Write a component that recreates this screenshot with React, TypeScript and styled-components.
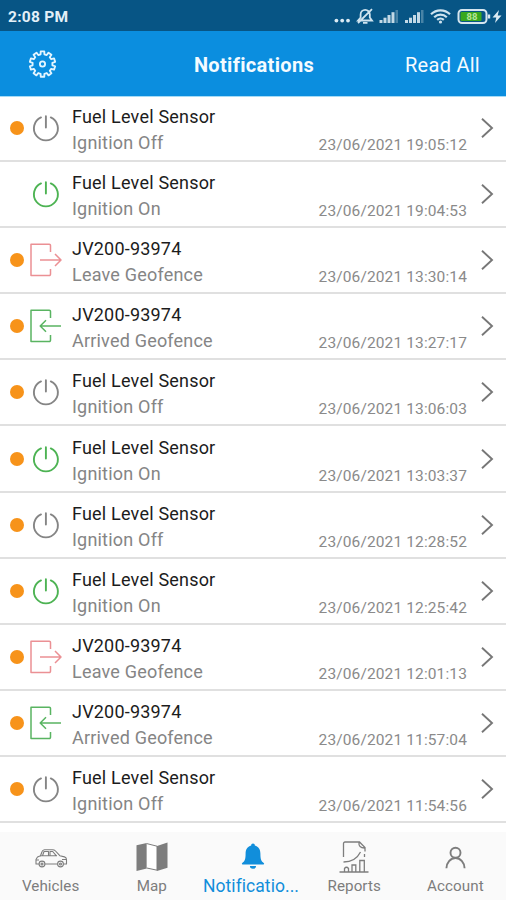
import React from "react";
import styled, { createGlobalStyle } from "styled-components";

const Global = createGlobalStyle`
  * { box-sizing: border-box; }
  body { margin: 0; background: #fff; font-family: Roboto, "Liberation Sans", sans-serif; }
  svg { display: block; flex: none; overflow: visible; }
`;

const Screen = styled.div`
  width: 506px;
  height: 900px;
  display: flex;
  flex-direction: column;
  overflow: hidden;
  background: #fff;
`;

const StatusBar = styled.div`
  height: 31px;
  flex: none;
  display: flex;
  align-items: center;
  justify-content: space-between;
  padding: 2px 1px 0 8px;
  background: #075585;
  color: #e3f0f8;
`;

const Clock = styled.span`
  font-size: 15.5px;
  font-weight: 700;
  letter-spacing: 0.25px;
`;

const Header = styled.header`
  height: 66px;
  flex: none;
  display: grid;
  grid-template-columns: 1fr auto 1fr;
  align-items: center;
  padding: 2px 26px 0 28px;
  border-bottom: 1px solid #a5dbf6;
  background: #0b8edf;
  color: #f4fbff;
`;

const Title = styled.h1`
  margin: 0;
  font-size: 20px;
  font-weight: 700;
  letter-spacing: 0.33px;
`;

const ReadAll = styled.span`
  justify-self: end;
  font-size: 20px;
  letter-spacing: 0.27px;
`;

const List = styled.main`
  flex: none;
  display: flex;
  flex-direction: column;
  margin-top: -1px;
`;

const Row = styled.div`
  height: 66.1px;
  display: flex;
  align-items: center;
  border-bottom: 2px solid #e0e0e0;
  padding: 0 12px 0 10px;
`;

const Dot = styled.span<{ $unread: boolean }>`
  width: 14px;
  height: 14px;
  flex: none;
  border-radius: 50%;
  background: ${(p) => (p.$unread ? "#f7931a" : "transparent")};
`;

const IconSlot = styled.div`
  width: 48px;
  flex: none;
  display: flex;
  justify-content: center;
  padding-right: 4px;
`;

const Body = styled.div`
  flex: 1;
  display: grid;
  grid-template-columns: 1fr auto;
  padding-top: 4px;
`;

const Name = styled.div`
  grid-column: 1 / -1;
  height: 26px;
  line-height: 26px;
  font-size: 18px;
  letter-spacing: 0.2px;
  color: #1c1c1c;
`;

const Event = styled.div`
  height: 26px;
  line-height: 26px;
  font-size: 18px;
  letter-spacing: 0.2px;
  color: #858585;
`;

const Time = styled.div`
  height: 26px;
  line-height: 30px;
  font-size: 15.5px;
  letter-spacing: 0.12px;
  color: #8a8a8a;
`;

const ChevronSlot = styled.div`
  margin-left: 13px;
`;

const Tabs = styled.nav`
  flex: 1;
  display: grid;
  grid-template-columns: repeat(5, 1fr);
  margin-top: 9px;
  background: #fafafa;
`;

const Tab = styled.div<{ $active?: boolean }>`
  min-width: 0;
  display: flex;
  flex-direction: column;
  align-items: center;
  padding-top: 7px;
  color: ${(p) => (p.$active ? "#118edb" : "#7d7d7d")};
`;

const TabIcon = styled.div`
  height: 36px;
  display: flex;
  align-items: center;
`;

const TabLabel = styled.span<{ $active?: boolean }>`
  font-size: ${(p) => (p.$active ? "17.5px" : "15.2px")};
  line-height: 22px;
  letter-spacing: 0.05px;
  margin-right: ${(p) => (p.$active ? "4px" : "0")};
  white-space: nowrap;
`;

const gearPath = (() => {
  const pts: string[] = [];
  const n = 10;
  for (let i = 0; i < n; i++) {
    const a = (i * 2 * Math.PI) / n - Math.PI / 2;
    for (const [d, r] of [[-0.19, 10.3], [-0.14, 13.3], [0.14, 13.3], [0.19, 10.3]]) {
      pts.push(`${(15 + r * Math.cos(a + d)).toFixed(2)} ${(15 + r * Math.sin(a + d)).toFixed(2)}`);
    }
  }
  return `M${pts.join("L")}Z`;
})();

const Gear = () => (
  <svg width="29" height="30" viewBox="0 1 30 30" fill="none" stroke="#e4f5ff" strokeWidth="1.900" strokeLinejoin="round">
    <path d={gearPath} />
    <circle cx="15" cy="15" r="2.700" />
  </svg>
);

const StatusIcons = () => (
  <svg width="172" height="20" viewBox="0 0 172 20" fill="none" stroke="#cfe3ef">
    <g fill="#dcebf4" stroke="none">
      <circle cx="3.400" cy="13.600" r="1.900" />
      <circle cx="9.200" cy="13.600" r="1.900" />
      <circle cx="15" cy="13.600" r="1.900" />
    </g>
    <path d="M25 13.500h14l-2.200-3V7.500a4.600 4.600 0 0 0-9.200 0v3ZM30 15.800h4.500M25 16 39 2.200" strokeWidth="1.800" />
    {[46.5, 72].map((x) => (
      <g key={x} stroke="none" fill="#c3d9e6">
        <rect x={x} y="13" width="3" height="3" />
        <rect x={x + 4} y="10.700" width="3" height="5.300" />
        <rect x={x + 8} y="8" width="3" height="8" />
        <rect x={x + 12} y="5.200" width="3" height="10.800" />
        <rect x={x + 16} y="3" width="2.500" height="13" opacity=".35" />
      </g>
    ))}
    <path d="M98 7.300a13.500 13.500 0 0 1 19 0M101.200 10.200a9 9 0 0 1 12.600 0M104.200 12.900a4.800 4.800 0 0 1 6.600 0" strokeWidth="2.200" />
    <circle cx="107.500" cy="15" r="1.600" fill="#cfe3ef" stroke="none" />
    <rect x="125.500" y="3" width="28" height="13" rx="3.500" stroke="#d6e6ef" strokeWidth="2" />
    <rect x="127.500" y="5" width="21" height="9" rx="1" fill="#38a81e" stroke="none" />
    <rect x="154.800" y="7.500" width="2.400" height="4" fill="#d6e6ef" stroke="none" />
    <text x="133.500" y="13" fontSize="9.500" fontWeight="700" fill="#b5e59a" stroke="none">88</text>
    <path d="m166 3-6.500 7.500h3.800L162 16l6.500-7.500h-3.800Z" fill="#dcebf4" stroke="none" />
  </svg>
);

const Power = ({ color }: { color: string }) => (
  <svg width="28" height="28" viewBox="0 0 28 28" fill="none" stroke={color} strokeWidth="1.900" strokeLinecap="round">
    <path d="M9 3.400a12 12 0 1 0 9.800 0M13.900 2.300V13.500" />
  </svg>
);

const Geofence = ({ leave }: { leave: boolean }) => (
  <svg width="32" height="34" viewBox="0.500 0 32 34" fill="none" stroke={leave ? "#eb9094" : "#59b461"} strokeWidth="1.500" strokeLinejoin="round">
    <path d="M21 9V2.500a1.200 1.200 0 0 0-1.200-1.200H1.500V32.500h18.300A1.200 1.200 0 0 0 21 31.300V26" />
    {leave ? <path d="M10.500 17H31.500M25.500 11l6 6-6 6" /> : <path d="M31.500 17H10.500M16.500 11.200 10.700 17l5.800 5.800" />}
  </svg>
);

const Chevron = () => (
  <svg width="14" height="20" viewBox="0 0 14 20" fill="none" stroke="#777" strokeWidth="1.900">
    <path d="m2 .8 10 9.200-10 9.200" />
  </svg>
);

const Car = () => (
  <svg width="32" height="20" viewBox="0 -1.500 32 20" fill="none" stroke="currentColor" strokeWidth="1.100" strokeLinejoin="round">
    <path d="M4 15.500H1v-4.500l1.500-2.500 3-1.300 1.500-4Q7.600 1.300 9.500 1.200h8q1.800 0 3 1.300l4.300 4.700 4.700 1.200q2 .6 2 2.700v4.400h-3M10 15.500h12.500" />
    <path d="M7.500 7.200 9 3h4.500v4.200ZM15 3h2.700l3.500 4.200H15ZM5 7.200h17M1 11.500H4M27 11h4.500" />
    <circle cx="7" cy="15.500" r="2.900" /><circle cx="25.500" cy="15.500" r="2.900" />
    <circle cx="7" cy="15.500" r="1" /><circle cx="25.500" cy="15.500" r="1" />
  </svg>
);

const MapIcon = () => (
  <svg width="32" height="30" viewBox="0 0 32 30" fill="currentColor">
    <path d="M.5 3.300 10.800 1v25.500L.5 29ZM21 4 31.500.5V25.800L21 29Z" />
    <path d="M10.800 1.600 21 4.200v24L10.800 26" fill="#fff" stroke="currentColor" strokeWidth="1" />
  </svg>
);

const Bell = () => (
  <svg width="24" height="27" viewBox="0 1 24 27" fill="currentColor">
    <path d="M12 .5a1.800 1.800 0 0 0-1.800 2C6.300 3.500 4.600 6.800 4.600 10.500c0 6.500-1.100 7.700-3.300 9.400-.8.700-.5 1.600.4 1.600h20.600c.9 0 1.200-.9.400-1.600-2.200-1.700-3.300-2.900-3.300-9.400 0-3.700-1.700-7-5.600-8A1.800 1.800 0 0 0 12 .5ZM8.900 23a3.100 2.800 0 0 0 6.200 0Z" />
  </svg>
);

const Report = () => (
  <svg width="30" height="32" viewBox="0 0 30 32" fill="none" stroke="currentColor" strokeWidth="1.300">
    <path d="M4.500 16V2.500a1.500 1.500 0 0 1 1.500-1.500h14.500l5.500 5.500v4M20 1.500c-.5 3.500 1.500 5.500 5.500 5.500M25.500 13v3M4.500 21c7 0 13.500-3 17-10" />
    <path d="M.5 31h29M5.500 31v-3.500q2-2.500 4 0V31M13 31v-7h3.800v7M20.800 31V19.500h4.500V31" />
  </svg>
);

const Account = () => (
  <svg width="22" height="23" viewBox="-.5 -.5 22 23" fill="none" stroke="currentColor" strokeWidth="1.900">
    <circle cx="11" cy="6.200" r="5" />
    <path d="M1.900 21.800a9.100 10.300 0 0 1 18.200 0" />
  </svg>
);

type Kind = "off" | "on" | "leave" | "arrive";

const kinds: Record<Kind, { name: string; event: string; icon: React.ReactNode }> = {
  off: { name: "Fuel Level Sensor", event: "Ignition Off", icon: <Power color="#858585" /> },
  on: { name: "Fuel Level Sensor", event: "Ignition On", icon: <Power color="#4db353" /> },
  leave: { name: "JV200-93974", event: "Leave Geofence", icon: <Geofence leave /> },
  arrive: { name: "JV200-93974", event: "Arrived Geofence", icon: <Geofence leave={false} /> },
};

const items: { kind: Kind; time: string; read?: boolean }[] = [
  { kind: "off", time: "19:05:12" },
  { kind: "on", time: "19:04:53", read: true },
  { kind: "leave", time: "13:30:14" },
  { kind: "arrive", time: "13:27:17" },
  { kind: "off", time: "13:06:03" },
  { kind: "on", time: "13:03:37" },
  { kind: "off", time: "12:28:52" },
  { kind: "on", time: "12:25:42" },
  { kind: "leave", time: "12:01:13" },
  { kind: "arrive", time: "11:57:04" },
  { kind: "off", time: "11:54:56" },
];

const tabs = [
  { label: "Vehicles", icon: <Car /> },
  { label: "Map", icon: <MapIcon /> },
  { label: "Notificatio...", icon: <Bell />, active: true },
  { label: "Reports", icon: <Report /> },
  { label: "Account", icon: <Account /> },
];

export default function App() {
  return (
    <Screen>
      <Global />
      <StatusBar>
        <Clock>2:08 PM</Clock>
        <StatusIcons />
      </StatusBar>
      <Header>
        <Gear />
        <Title>Notifications</Title>
        <ReadAll>Read All</ReadAll>
      </Header>
      <List>
        {items.map(({ kind, time, read }) => (
          <Row key={time}>
            <Dot $unread={!read} />
            <IconSlot>{kinds[kind].icon}</IconSlot>
            <Body>
              <Name>{kinds[kind].name}</Name>
              <Event>{kinds[kind].event}</Event>
              <Time>23/06/2021 {time}</Time>
            </Body>
            <ChevronSlot><Chevron /></ChevronSlot>
          </Row>
        ))}
      </List>
      <Tabs>
        {tabs.map(({ label, icon, active }) => (
          <Tab key={label} $active={active}>
            <TabIcon>{icon}</TabIcon>
            <TabLabel $active={active}>{label}</TabLabel>
          </Tab>
        ))}
      </Tabs>
    </Screen>
  );
}
